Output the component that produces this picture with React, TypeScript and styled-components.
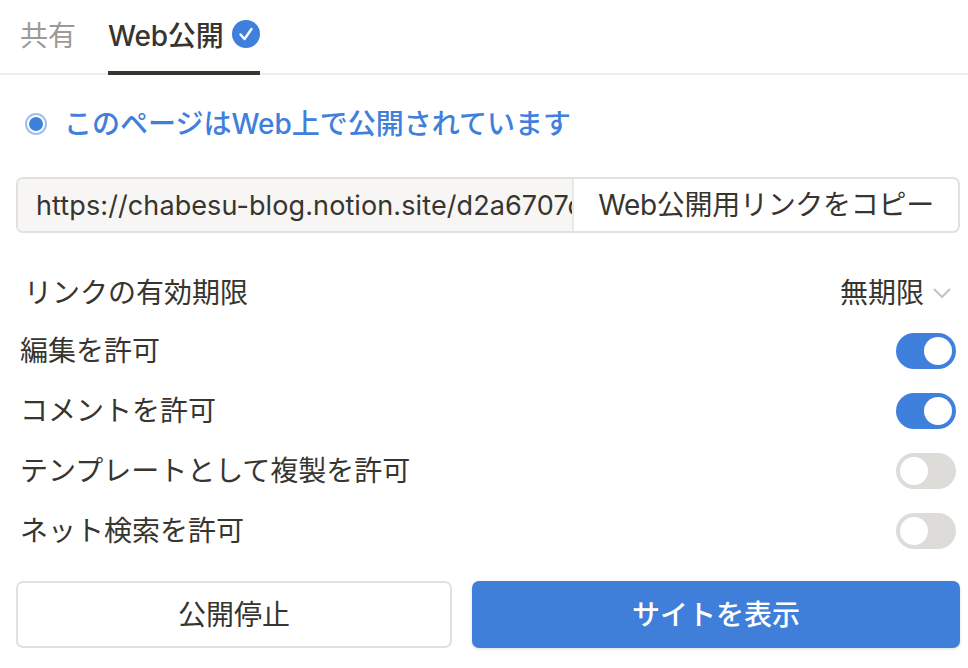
import React from 'react';
import styled, { createGlobalStyle } from 'styled-components';

const GlobalStyle = createGlobalStyle`
  html, body {
    margin: 0;
    padding: 0;
    background: #ffffff;
  }
  body {
    font-family: Inter, "Noto Sans CJK JP", sans-serif;
    color: #37352f;
    -webkit-font-smoothing: antialiased;
  }
`;

const Page = styled.div`
  width: 968px;
  height: 668px;
  overflow: hidden;
  box-sizing: border-box;
`;

const TabBar = styled.div`
  display: flex;
  height: 75px;
  padding-left: 20px;
  gap: 32px;
  box-sizing: border-box;
  border-bottom: 2px solid #ededec;
`;

const Tab = styled.div<{ $active?: boolean }>`
  position: relative;
  display: flex;
  align-items: center;
  gap: 9px;
  height: 73px;
  padding-bottom: 5px;
  box-sizing: border-box;
  font-size: 28px;
  letter-spacing: ${p => (p.$active ? '-0.2px' : '0')};
  font-weight: ${p => (p.$active ? 500 : 400)};
  color: ${p => (p.$active ? '#37352f' : '#9b9a97')};

  ${p =>
    p.$active &&
    `
    &::after {
      content: '';
      position: absolute;
      left: 0;
      right: 0;
      bottom: -2px;
      height: 4px;
      background: #37352f;
    }
  `}
`;

const Status = styled.div`
  display: flex;
  align-items: center;
  gap: 17px;
  height: 44px;
  margin-top: 27px;
  padding-left: 25px;
  font-size: 28px;
  font-weight: 500;
  color: #3f80dc;
`;

const StatusText = styled.span`
  padding-bottom: 4px;
`;

const RadioDot = styled.span`
  display: block;
  width: 22px;
  height: 22px;
  box-sizing: border-box;
  border-radius: 50%;
  border: 2px solid #9dc0ee;
  padding: 2px;

  &::before {
    content: '';
    display: block;
    width: 14px;
    height: 14px;
    border-radius: 50%;
    background: #3f80dc;
  }
`;

const LinkBox = styled.div`
  display: flex;
  height: 56px;
  margin: 31px 8px 0 16px;
  box-sizing: border-box;
  border: 2px solid #e1e1e0;
  border-radius: 7px;
  overflow: hidden;
`;

const UrlField = styled.div`
  width: 556px;
  flex-shrink: 0;
  padding-left: 18px;
  box-sizing: border-box;
  background: #f7f6f4;
  border-right: 2px solid #e9e9e7;
  font-size: 27px;
  letter-spacing: 0.1px;
  line-height: 53px;
  white-space: nowrap;
  overflow: hidden;
`;

const CopyButton = styled.div`
  flex: 1;
  text-align: center;
  font-size: 28px;
  letter-spacing: -0.3px;
  line-height: 53px;
  white-space: nowrap;
`;

const Options = styled.div`
  display: flex;
  flex-direction: column;
  margin: 30px 12px 0 20px;
`;

const Row = styled.div`
  display: flex;
  align-items: center;
  justify-content: space-between;
  height: 60px;
  box-sizing: border-box;
  font-size: 28px;
`;

const RowLabel = styled.span`
  padding-bottom: 4px;
`;

const ExpiryRow = styled(Row)`
  height: 58px;
  padding: 2px 0 0 4px;
`;

const ExpiryValue = styled.div`
  display: flex;
  align-items: center;
  gap: 9px;
  padding-right: 5px;
`;

const Switch = styled.span<{ $on?: boolean }>`
  display: flex;
  justify-content: ${p => (p.$on ? 'flex-end' : 'flex-start')};
  width: 60px;
  height: 36px;
  padding: 4px;
  box-sizing: border-box;
  border-radius: 18px;
  background: ${p => (p.$on ? '#3f80dc' : '#dddcd9')};

  &::before {
    content: '';
    display: block;
    width: 28px;
    height: 28px;
    border-radius: 50%;
    background: #ffffff;
  }
`;

const Actions = styled.div`
  display: flex;
  gap: 20px;
  margin: 20px 8px 0 16px;
`;

const ActionButton = styled.div<{ $primary?: boolean }>`
  flex: ${p => (p.$primary ? '1' : '0 0 436px')};
  height: 67px;
  box-sizing: border-box;
  display: flex;
  align-items: center;
  justify-content: center;
  padding-bottom: 3px;
  font-size: 28px;
  border-radius: 7px;
  ${p =>
    p.$primary
      ? `
    background: #3f7fda;
    color: #ffffff;
    font-weight: 500;
    box-shadow: 0 1px 3px rgba(15, 15, 15, 0.15);
  `
      : `
    background: #ffffff;
    border: 2px solid #e1e1e0;
  `}
`;

const VerifiedIcon = () => (
  <svg width="28" height="28" viewBox="0 0 28 28" aria-hidden="true">
    <circle cx="14" cy="14" r="14" fill="#3f80dc" />
    <path d="M8.5 14.5l4 4.5 7-10" fill="none" stroke="#fff" strokeWidth="2.4" strokeLinecap="round" strokeLinejoin="round" />
  </svg>
);

const ChevronIcon = () => (
  <svg width="18" height="12" viewBox="0 0 18 12" aria-hidden="true">
    <path d="M1 2l8 8 8-8" fill="none" stroke="#c4c4c2" strokeWidth="2.2" />
  </svg>
);

const permissions = [
  { label: '編集を許可', on: true },
  { label: 'コメントを許可', on: true },
  { label: 'テンプレートとして複製を許可', on: false },
  { label: 'ネット検索を許可', on: false },
];

const App = () => {
  return (
    <Page>
      <GlobalStyle />
      <TabBar>
        <Tab>共有</Tab>
        <Tab $active>
          Web公開
          <VerifiedIcon />
        </Tab>
      </TabBar>

      <Status>
        <RadioDot />
        <StatusText>このページはWeb上で公開されています</StatusText>
      </Status>

      <LinkBox>
        <UrlField>https://chabesu-blog.notion.site/d2a6707d8f3e4b1c</UrlField>
        <CopyButton>Web公開用リンクをコピー</CopyButton>
      </LinkBox>

      <Options>
        <ExpiryRow>
          <RowLabel>リンクの有効期限</RowLabel>
          <ExpiryValue>
            <RowLabel>無期限</RowLabel>
            <ChevronIcon />
          </ExpiryValue>
        </ExpiryRow>
        {permissions.map(item => (
          <Row key={item.label}>
            <RowLabel>{item.label}</RowLabel>
            <Switch $on={item.on} />
          </Row>
        ))}
      </Options>

      <Actions>
        <ActionButton>公開停止</ActionButton>
        <ActionButton $primary>サイトを表示</ActionButton>
      </Actions>
    </Page>
  );
};

export default App;
